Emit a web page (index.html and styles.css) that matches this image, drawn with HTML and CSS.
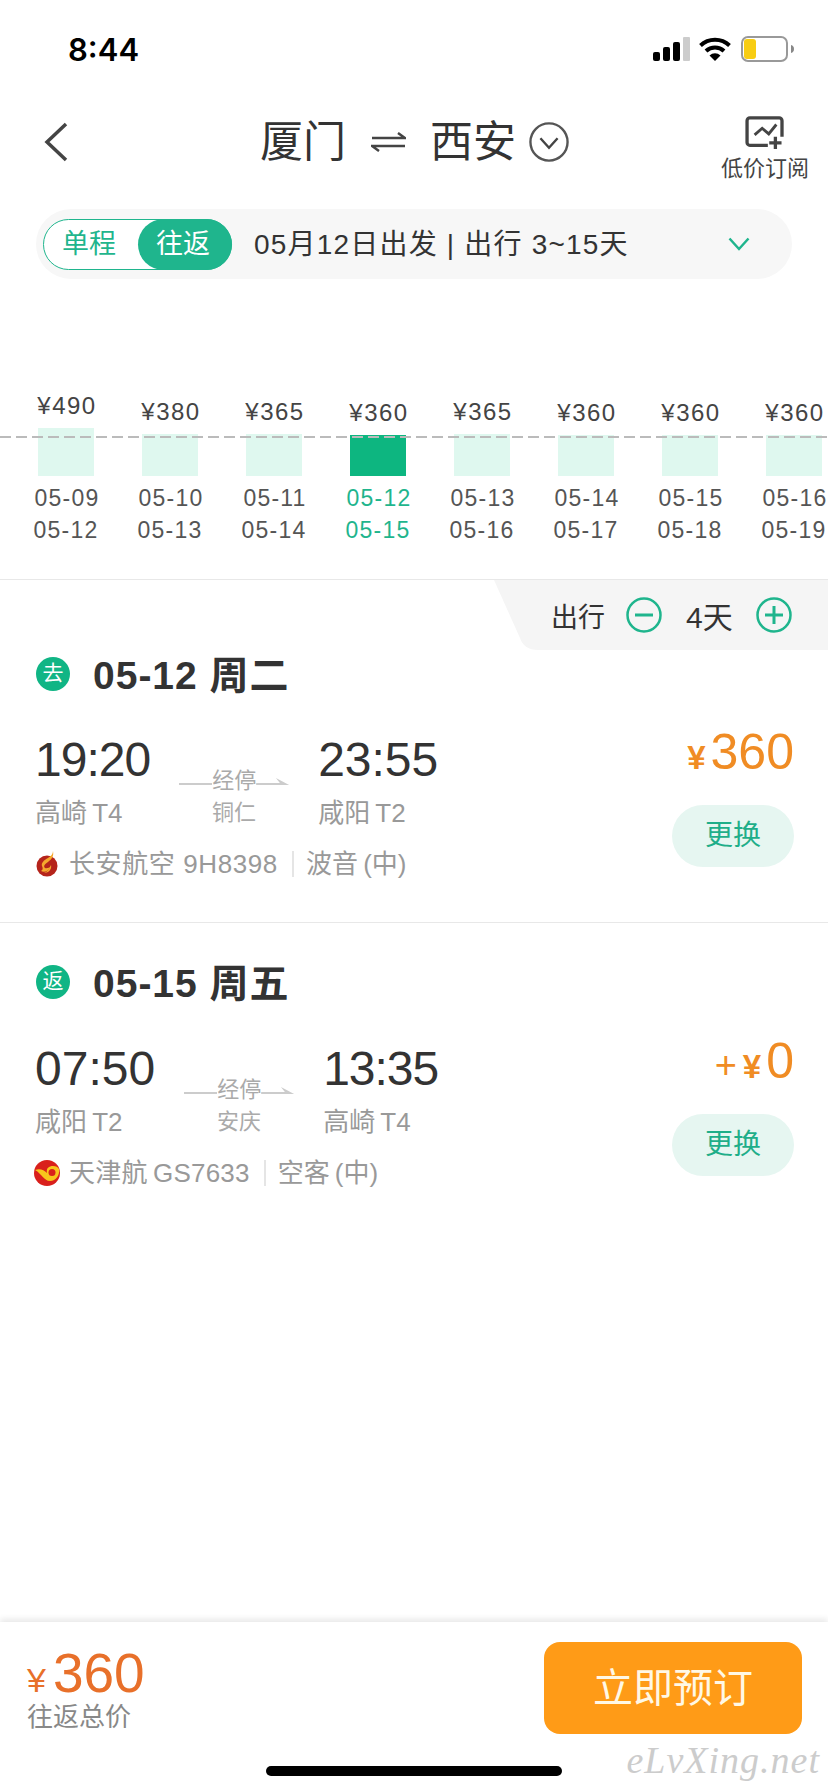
FILE: index.html

```html
<!DOCTYPE html>
<html lang="zh-CN">
<head>
  <meta charset="UTF-8">
  <meta name="viewport" content="width=device-width, initial-scale=1.0">
  <title>低价日历</title>
  <link rel="stylesheet" href="styles.css">
</head>
<body>

<div class="page">
  <div class="status">
    <div class="clock">8:44</div>
    <div class="status-icons">
      <svg width="37" height="24" viewBox="0 0 37 24">
        <rect x="0" y="15" width="7" height="9" rx="2" fill="#000"/>
        <rect x="10" y="10" width="7" height="14" rx="2" fill="#000"/>
        <rect x="20" y="5" width="7" height="19" rx="2" fill="#000"/>
        <rect x="30" y="0" width="7" height="24" rx="1" fill="#ccc"/>
      </svg>
      <svg width="32" height="24" viewBox="0 0 32 24">
        <path d="M1.500 8.500a21 21 0 0 1 29 0" fill="none" stroke="#000" stroke-width="4"/>
        <path d="M7 14a13 13 0 0 1 18 0" fill="none" stroke="#000" stroke-width="4"/>
        <path d="M16 24l-5.500-5.500a8 8 0 0 1 11 0z" fill="#000"/>
      </svg>
      <svg width="54" height="26" viewBox="0 0 54 26">
        <rect x="1" y="1" width="45" height="24" rx="6" fill="#fff" stroke="#999" stroke-width="2"/>
        <rect x="3" y="3" width="12" height="20" rx="3" fill="#f8cd13"/>
        <path d="M50 9c2 .5 3 2 3 4s-1 3.500-3 4z" fill="#888"/>
      </svg>
    </div>
  </div>

  <div class="topbar">
    <svg class="back" width="24" height="40" viewBox="0 0 24 40">
      <path d="M22 2L3 20l19 18" fill="none" stroke="#444" stroke-width="3.500"/>
    </svg>
    <div class="route">
      <span class="city">厦门</span>
      <svg class="swap" width="35" height="20" viewBox="0 0 35 20">
        <path d="M1 6h33L27 1M34 14H1l7 5" fill="none" stroke="#444" stroke-width="2.500"/>
      </svg>
      <span class="city">西安</span>
      <svg class="route-more" width="40" height="40" viewBox="0 0 42 42">
        <circle cx="21" cy="21" r="19.500" fill="none" stroke="#555" stroke-width="2.500"/>
        <path d="M12 17l9 10 9-10" fill="none" stroke="#444" stroke-width="2.500"/>
      </svg>
    </div>
    <div class="subscribe">
      <svg width="40" height="34" viewBox="0 0 42 36">
        <path d="M24 31H5a3 3 0 0 1-3-3V5a3 3 0 0 1 3-3h31a3 3 0 0 1 3 3v17" fill="none" stroke="#444" stroke-width="3.500"/>
        <path d="M10 20l8-7 7 6 8-10" fill="none" stroke="#444" stroke-width="3"/>
        <path d="M32 22v13M25.500 28.500h13" fill="none" stroke="#444" stroke-width="3.500"/>
      </svg>
      <div>低价订阅</div>
    </div>
  </div>

  <div class="filter">
    <div class="toggle">
      <span class="toggle-item">单程</span>
      <span class="toggle-item active">往返</span>
    </div>
    <div class="filter-text">05月12日出发 | 出行 3~15天</div>
    <svg class="filter-more" width="22" height="14" viewBox="0 0 22 14">
      <path d="M1.500 1.500L11 12l9.500-10.500" fill="none" stroke="#1fb58d" stroke-width="2.500"/>
    </svg>
  </div>

  <div class="chart">
    <div class="dash"></div>
    <div class="day">
      <div class="price">¥490</div>
      <div class="bar" style="height: 48px"></div>
      <div class="dates">05-09<br>05-12</div>
    </div>
    <div class="day">
      <div class="price">¥380</div>
      <div class="bar" style="height: 42px"></div>
      <div class="dates">05-10<br>05-13</div>
    </div>
    <div class="day">
      <div class="price">¥365</div>
      <div class="bar" style="height: 42px"></div>
      <div class="dates">05-11<br>05-14</div>
    </div>
    <div class="day selected">
      <div class="price">¥360</div>
      <div class="bar" style="height: 41px"></div>
      <div class="dates">05-12<br>05-15</div>
    </div>
    <div class="day">
      <div class="price">¥365</div>
      <div class="bar" style="height: 42px"></div>
      <div class="dates">05-13<br>05-16</div>
    </div>
    <div class="day">
      <div class="price">¥360</div>
      <div class="bar" style="height: 41px"></div>
      <div class="dates">05-14<br>05-17</div>
    </div>
    <div class="day">
      <div class="price">¥360</div>
      <div class="bar" style="height: 41px"></div>
      <div class="dates">05-15<br>05-18</div>
    </div>
    <div class="day">
      <div class="price">¥360</div>
      <div class="bar" style="height: 41px"></div>
      <div class="dates">05-16<br>05-19</div>
    </div>
  </div>

  <div class="stay-row">
    <div class="stay">
      <span>出行</span>
      <svg width="36" height="36" viewBox="0 0 36 36">
        <circle cx="18" cy="18" r="16.500" fill="none" stroke="#1fb58d" stroke-width="2.500"/>
        <path d="M9 18h18" stroke="#1fb58d" stroke-width="3"/>
      </svg>
      <span class="stay-days">4天</span>
      <svg width="36" height="36" viewBox="0 0 36 36">
        <circle cx="18" cy="18" r="16.500" fill="none" stroke="#1fb58d" stroke-width="2.500"/>
        <path d="M9 18h18M18 9v18" stroke="#1fb58d" stroke-width="3"/>
      </svg>
    </div>
  </div>

  <div class="leg">
    <div class="leg-title"><span class="leg-badge">去</span><span class="leg-date">05-12 周二</span></div>
    <div class="flight">
      <div class="flight-info">
        <div class="times">
          <div>
            <div class="time tight">19:20</div>
            <div class="airport">高崎 T4</div>
          </div>
          <div class="via">
            <div class="via-line">经停</div>
            <div class="via-city">铜仁</div>
          </div>
          <div>
            <div class="time">23:55</div>
            <div class="airport">咸阳 T2</div>
          </div>
        </div>
        <div class="airline">
          <svg class="logo-changan" width="24" height="26" viewBox="0 0 24 26">
            <circle cx="11" cy="15" r="10.500" fill="#b5241b"/>
            <path d="M17 0c1 5-1 8-5 11-3 2-5 4-3 6 2 1 5-1 5-1-1 4-6 6-9 4 2-1 2-3 1-5-1-3 2-6 6-8 3-2 5-4 5-7z" fill="#f5a92e"/>
            <path d="M15 14c1 4-2 8-7 8 3-1 5-4 7-8z" fill="#f5a92e"/>
          </svg>
          <span class="airline-text">长安航空 9H8398</span>
          <span class="airline-sep"></span>
          <span class="airline-text airline-type">波音 (中)</span>
        </div>
      </div>
      <div class="flight-side">
        <div class="fare"><span class="yen">¥</span>360</div>
        <div class="change">更换</div>
      </div>
    </div>
  </div>

  <div class="leg">
    <div class="leg-title"><span class="leg-badge">返</span><span class="leg-date">05-15 周五</span></div>
    <div class="flight">
      <div class="flight-info">
        <div class="times">
          <div>
            <div class="time">07:50</div>
            <div class="airport">咸阳 T2</div>
          </div>
          <div class="via">
            <div class="via-line">经停</div>
            <div class="via-city">安庆</div>
          </div>
          <div>
            <div class="time tight">13:35</div>
            <div class="airport">高崎 T4</div>
          </div>
        </div>
        <div class="airline">
          <svg class="logo-tianjin" width="26" height="26" viewBox="0 0 26 26">
            <circle cx="13" cy="13" r="13" fill="#d9201c"/>
            <path d="M1 10c5-2 9 0 12 3-1-5 2-7 6-7 3 0 5 1 6 3 1 6-3 12-9 12-6 0-8-7-15-11z" fill="#f8c51c"/>
            <circle cx="18" cy="12.500" r="3.500" fill="#d9201c"/>
          </svg>
          <span class="airline-text airline-short">天津航 GS7633</span>
          <span class="airline-sep"></span>
          <span class="airline-text airline-type">空客 (中)</span>
        </div>
      </div>
      <div class="flight-side">
        <div class="fare"><span class="plus">+</span><span class="yen">¥</span>0</div>
        <div class="change">更换</div>
      </div>
    </div>
  </div>

  <div class="footer">
    <div>
      <div class="total"><span class="total-yen">¥</span>360</div>
      <div class="total-label">往返总价</div>
    </div>
    <div class="book">立即预订</div>
    <div class="home-bar"></div>
    <div class="watermark">eLvXing.net</div>
  </div>
</div>

</body>
</html>
```

FILE: styles.css

```css
html, body {
  margin: 0;
  padding: 0;
  background: #fff;
}
.page {
  position: relative;
  display: flex;
  flex-direction: column;
  width: 828px;
  height: 1792px;
  overflow: hidden;
  font-family: "Liberation Sans", "Noto Sans CJK SC", sans-serif;
  color: #333;
}
.status {
  display: flex;
  justify-content: space-between;
  align-items: center;
  height: 98px;
  padding: 0 33px 0 68px;
}
.clock {
  font-family: Inter, sans-serif;
  font-size: 31px;
  font-weight: 600;
  color: #000;
}
.status-icons {
  display: flex;
  align-items: center;
  gap: 10px;
}
.status-icons svg:first-child {
  margin-right: -1px;
}
.topbar {
  display: flex;
  align-items: center;
  height: 88px;
  padding-left: 44px;
}
.back {
  flex: none;
}
.route {
  display: flex;
  align-items: center;
  margin-left: 192px;
}
.city {
  font-size: 43px;
  line-height: 50px;
  color: #333;
}
.swap {
  margin: 0 24px 0 25px;
}
.route-more {
  margin-left: 13px;
}
.subscribe {
  margin-left: auto;
  width: 88px;
  padding-right: 19px;
  padding-top: 15px;
  text-align: center;
  font-size: 22px;
  line-height: 30px;
  color: #444;
}
.subscribe svg {
  display: block;
  margin: 0 auto 4px;
}
.filter {
  display: flex;
  align-items: center;
  height: 70px;
  margin: 23px 36px 0;
  padding: 0 42px 0 7px;
  border-radius: 35px;
  background: #f7f7f7;
}
.toggle {
  display: flex;
  width: 189px;
  height: 51px;
  box-sizing: border-box;
  border: 1px solid #1fb58d;
  border-radius: 26px;
  background: #fff;
  font-size: 27px;
  line-height: 49px;
  color: #1fb58d;
}
.toggle-item {
  width: 94px;
  padding-left: 18px;
  box-sizing: border-box;
}
.toggle-item.active {
  margin-left: auto;
  margin-right: -1px;
  margin-top: -1px;
  height: 51px;
  line-height: 51px;
  border-radius: 26px;
  background: #1fb58d;
  color: #fff;
}
.filter-text {
  margin-left: 22px;
  padding-bottom: 4px;
  font-size: 28px;
  letter-spacing: 1.2px;
  color: #333;
}
.filter-more {
  margin-left: auto;
}
.chart {
  position: relative;
  display: flex;
  align-items: flex-end;
  height: 301px;
  padding-left: 14px;
  box-sizing: border-box;
  border-bottom: 1px solid #e8e8e8;
  overflow: hidden;
}
.dash {
  position: absolute;
  left: 0;
  right: 0;
  top: 157px;
  height: 2px;
  background: repeating-linear-gradient(to right, #bbb 0, #bbb 11px, transparent 11px, transparent 16px);
}
.day {
  flex: none;
  width: 104px;
  padding-bottom: 33px;
  text-align: center;
}
.price {
  font-size: 24px;
  line-height: 30px;
  letter-spacing: 1.5px;
  text-indent: 2px;
  margin-bottom: 7px;
  color: #444;
}
.bar {
  width: 56px;
  margin: 0 auto 6px;
  background: #dff8ef;
}
.dates {
  font-size: 23px;
  line-height: 32px;
  letter-spacing: 1.2px;
  text-indent: 2px;
  color: #555;
}
.selected .bar {
  background: #0db680;
}
.selected .dates {
  color: #1fb58d;
  font-weight: 500;
}
.stay-row {
  display: flex;
  justify-content: flex-end;
}
.stay {
  display: flex;
  align-items: center;
  width: 334px;
  height: 70px;
  padding-left: 57px;
  box-sizing: border-box;
  clip-path: path("M0 0H334V70H44Q30 70 26 58Z");
  background: #f5f5f5;
  font-size: 27px;
  color: #333;
}
.stay svg {
  margin-left: 21px;
}
.stay-days {
  margin-left: 24px;
  margin-right: 2px;
  font-size: 30px;
}
.leg {
  padding: 0 34px 0 35px;
}
.leg + .leg {
  padding-top: 35px;
  border-top: 1px solid #e8e8e8;
}
.leg-title {
  display: flex;
  align-items: center;
  height: 48px;
}
.leg-date {
  padding-bottom: 4px;
  font-size: 39px;
  font-weight: bold;
  letter-spacing: 1px;
  color: #333;
}
.leg-badge {
  flex: none;
  width: 34px;
  height: 34px;
  margin-left: 1px;
  margin-right: 23px;
  border-radius: 50%;
  background: #10b585;
  text-align: center;
  font-size: 21px;
  font-weight: normal;
  line-height: 32px;
  color: #fff;
}
.flight {
  display: flex;
  justify-content: space-between;
  margin-top: 34px;
  padding-bottom: 40px;
}
.leg + .leg .flight {
  margin-top: 35px;
}
.times {
  display: flex;
}
.time {
  font-size: 48px;
  line-height: 56px;
  color: #333;
}
.tight {
  letter-spacing: -1px;
}
.airport {
  margin-top: 7px;
  font-size: 26px;
  line-height: 36px;
  word-spacing: -2px;
  color: #999;
}
.via {
  width: 110px;
  margin: 33px 29px 0 29px;
  text-align: center;
  font-size: 22px;
  line-height: 32px;
  color: #aaa;
}
.via-line {
  display: flex;
  align-items: center;
  justify-content: center;
}
.via-line::before,
.via-line::after {
  content: "";
  flex: 1;
  height: 2px;
  margin-top: 6px;
  background: #ccc;
}
.via-line::after {
  height: 7px;
  margin-top: 1px;
  background: #ccc;
  clip-path: polygon(0 calc(100% - 2px), 72% calc(100% - 2px), 60% 0, 100% 100%, 0 100%);
}
.airline {
  display: flex;
  align-items: center;
  margin-top: 15px;
  height: 36px;
  font-size: 26px;
  color: #999;
}
.airline-text {
  margin-bottom: 5px;
  letter-spacing: .6px;
}
.airline-short {
  letter-spacing: .2px;
  word-spacing: -2px;
}
.airline-type {
  letter-spacing: 0;
  word-spacing: -2px;
}
.logo-changan {
  margin-left: 1px;
  margin-right: 9px;
}
.logo-tianjin {
  margin-left: -1px;
  margin-right: 9px;
}
.airline-sep {
  width: 2px;
  height: 26px;
  margin: 0 12px 0 14px;
  background: #e5e5e5;
}
.flight-side {
  display: flex;
  flex-direction: column;
  align-items: flex-end;
  margin-top: -8px;
}
.fare {
  font-size: 50px;
  line-height: 56px;
  color: #f08c24;
}
.yen {
  margin-right: 5px;
  font-size: 33px;
  font-weight: bold;
  line-height: 1;
}
.plus {
  margin-right: 6px;
  font-size: 38px;
  line-height: 1;
}
.change {
  width: 122px;
  height: 62px;
  margin-top: 25px;
  border-radius: 31px;
  background: #e6f6f1;
  text-align: center;
  font-size: 28px;
  line-height: 62px;
  color: #1fae89;
}
.footer {
  position: absolute;
  left: 0;
  right: 0;
  bottom: 0;
  display: flex;
  justify-content: space-between;
  height: 150px;
  padding: 20px 26px 0 27px;
  background: #fff;
  box-shadow: 0 -3px 6px rgba(0, 0, 0, .09);
}
.total {
  margin-top: 3px;
  font-size: 55px;
  line-height: 56px;
  color: #e8702a;
}
.total-yen {
  margin-right: 7px;
  font-size: 34px;
  line-height: 1;
}
.total-label {
  font-size: 26px;
  line-height: 32px;
  color: #888;
}
.book {
  width: 258px;
  height: 92px;
  border-radius: 16px;
  background: #ff9b17;
  text-align: center;
  font-size: 40px;
  line-height: 92px;
  color: #fff8e6;
}
.home-bar {
  position: absolute;
  left: 266px;
  bottom: 16px;
  width: 296px;
  height: 10px;
  border-radius: 5px;
  background: #000;
}
.watermark {
  position: absolute;
  right: 8px;
  bottom: 10px;
  font-family: "Liberation Serif", serif;
  font-style: italic;
  font-size: 38px;
  letter-spacing: 1px;
  color: #ccc;
}
```
